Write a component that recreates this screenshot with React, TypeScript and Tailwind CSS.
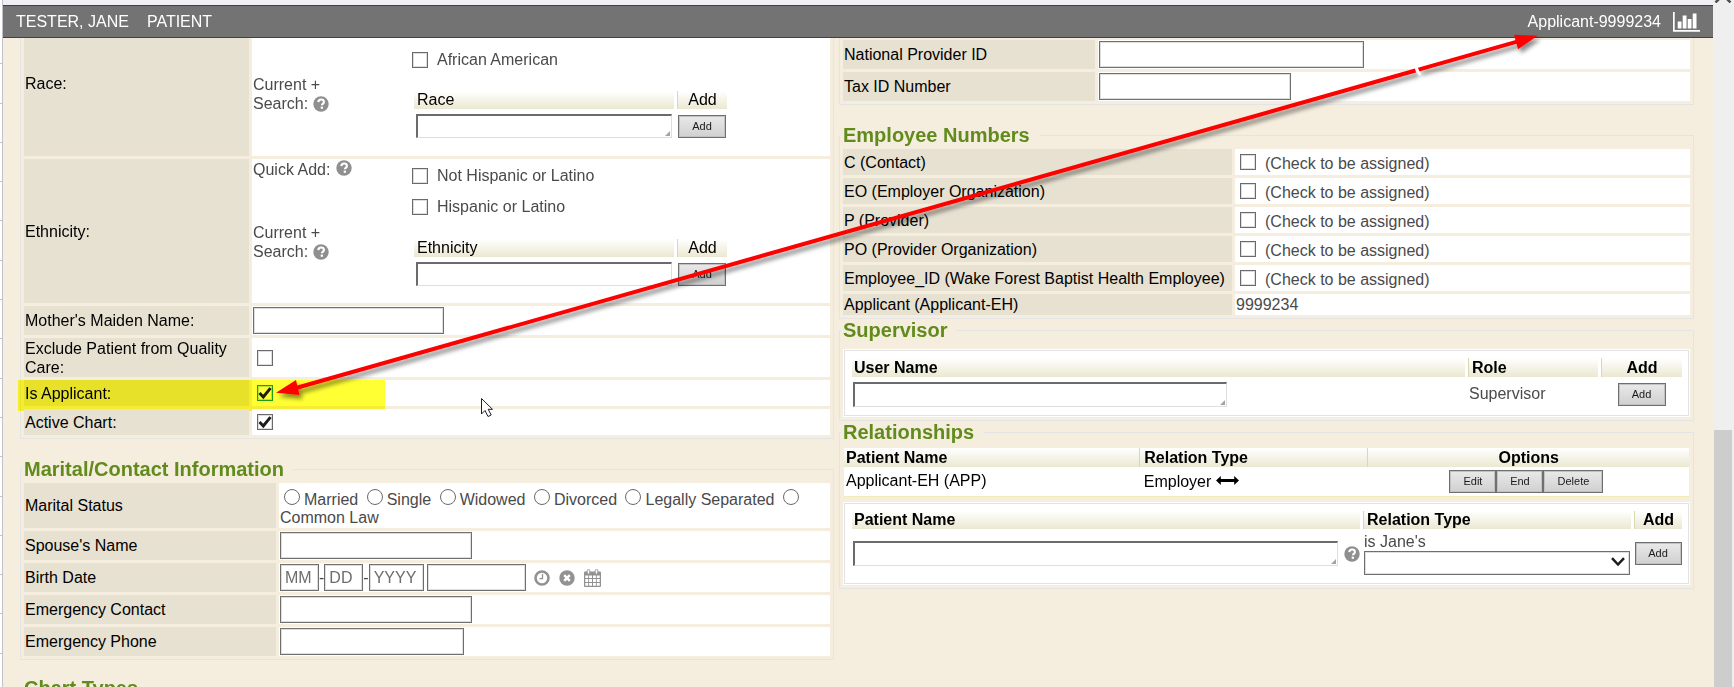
import type { ReactNode } from "react";

/* ---------- icons ---------- */

function HelpIcon() {
  return (
    <svg className="h-4 w-4 shrink-0" viewBox="0 0 16 16" role="img" aria-label="Help">
      <circle cx="8" cy="8" r="7.7" fill="#8f8f8f" />
      <path d="M5.3 6.1C5.4 4.4 6.5 3.5 8.1 3.5c1.6 0 2.8.9 2.8 2.4 0 1.9-2 1.9-2 3.3" fill="none" stroke="#fff" strokeWidth="2.1" />
      <rect x="7.7" y="10.6" width="2.3" height="2.2" fill="#fff" />
    </svg>
  );
}

function ChartIcon() {
  return (
    <svg className="h-5 w-[27px]" viewBox="0 0 27 20" fill="#fff" aria-hidden="true">
      <path d="M0 0h1.7v18H27v1.7H0z" />
      <path d="M4.700 9.500h3.800v7H4.700zM9.700 3.500h3.800v13H9.700zM14.700 7h3.800v9.500h-3.800zM19.700 1.500h3.800v15h-3.800z" />
    </svg>
  );
}

function ClockIcon() {
  return (
    <svg className="h-4 w-4" viewBox="0 0 16 16" fill="none" stroke="#929292" aria-hidden="true">
      <circle cx="8" cy="8" r="6.5" strokeWidth="2.6" />
      <path d="M8.500 4v4.700H5.400" strokeWidth="1.300" />
    </svg>
  );
}

function ClearIcon() {
  return (
    <svg className="h-4 w-4" viewBox="0 0 16 16" aria-hidden="true">
      <circle cx="8" cy="8" r="7.700" fill="#929292" />
      <path d="M5.200 5.200l5.600 5.600M10.800 5.200l-5.600 5.600" stroke="#fff" strokeWidth="2.500" />
    </svg>
  );
}

function CalendarIcon() {
  return (
    <svg className="h-[18px] w-[17px]" viewBox="0 0 17 18" aria-hidden="true">
      <rect x="0" y="2.500" width="17" height="15.500" rx="1" fill="#929292" />
      <path
        fill="#fff"
        d="M1.300 6.500h2.900v2.600H1.300zM5.100 6.500h2.900v2.600H5.100zM9 6.500h2.900v2.600H9zM12.800 6.500h2.900v2.600h-2.900zM1.300 10.100h2.900v3H1.300zM5.100 10.100h2.900v3H5.100zM9 10.100h2.900v3H9zM12.800 10.100h2.900v3h-2.900zM1.300 14.100h2.900v2.700H1.300zM5.100 14.100h2.900v2.700H5.100zM9 14.100h2.900v2.700H9zM12.800 14.100h2.900v2.700h-2.900z"
      />
      <rect x="3.200" y="0.500" width="2.600" height="4.500" rx="1.200" fill="#fff" stroke="#929292" />
      <rect x="11.200" y="0.500" width="2.600" height="4.500" rx="1.200" fill="#fff" stroke="#929292" />
    </svg>
  );
}

function BothWaysIcon() {
  return (
    <svg className="mb-1 h-[9px] w-[23px]" viewBox="0 0 23 9" aria-hidden="true">
      <path d="M0 4.500L4.800 0v3h13.400V0L23 4.500 18.200 9V6H4.800v3z" fill="#000" />
    </svg>
  );
}

/* ---------- form controls ---------- */

function Check({ id, checked = false, active = false }: { id: string; checked?: boolean; active?: boolean }) {
  return (
    <span className="relative inline-flex h-4 w-4 shrink-0">
      <input
        id={id}
        type="checkbox"
        defaultChecked={checked}
        className={`peer h-4 w-4 appearance-none border bg-white ${
          active ? "border-[#1a9e58] shadow-[inset_0_0_0_1px_#b8e8d0]" : "border-[#6a6a6a] shadow-[inset_0_0_0_1px_#dedede]"
        }`}
      />
      <svg className="pointer-events-none absolute inset-0 hidden h-4 w-4 peer-checked:block" viewBox="0 0 16 16" aria-hidden="true">
        <path d="M2.500 8L6.300 12 13.500 3.200" fill="none" stroke="#1c1c1c" strokeWidth="2.900" />
      </svg>
    </span>
  );
}

const BOX = "h-[27px] border border-[#6f6f6f] bg-white px-1 text-base shadow-[inset_0_0_0_1px_#dedede] placeholder:text-[#6d6d6d] outline-none";

function Box({ id, width, hint, label }: { id: string; width: string; hint?: string; label?: string }) {
  return <input id={id} type="text" placeholder={hint} aria-label={label} className={`${BOX} ${width}`} />;
}

function Area({ label, size, grip = true }: { label: string; size: string; grip?: boolean }) {
  return (
    <span className={`relative flex ${size}`}>
      <textarea
        aria-label={label}
        rows={1}
        className="h-full w-full resize-none overflow-hidden border border-t-2 border-l-2 border-t-[#6b6b6b] border-r-[#dedede] border-b-[#dedede] border-l-[#6b6b6b] bg-white outline-none"
      />
      {grip && (
        <svg className="pointer-events-none absolute right-[2px] bottom-[2px] h-[5px] w-[5px]" viewBox="0 0 5 5" aria-hidden="true">
          <path d="M5 0v5H0z" fill="#a3a3a3" />
        </svg>
      )}
    </span>
  );
}

function Button({ children, width = "w-12" }: { children: ReactNode; width?: string }) {
  return (
    <button
      type="button"
      className={`h-[23px] border border-[#6f6f6f] bg-linear-to-b from-[#e9e9e9] to-[#d0d0d0] text-[11px] leading-none text-[#1a1a1a] shadow-[inset_0_0_0_1px_#c2c2c2] ${width}`}
    >
      {children}
    </button>
  );
}

/* ---------- layout pieces ---------- */

function Section({ title, className = "", children }: { title?: string; className?: string; children?: ReactNode }) {
  return (
    <fieldset className={`min-w-0 border border-[#e4e4e4] px-[3px] pb-[3px] ${title ? "" : "border-t-0"} ${className}`}>
      {title && <legend className="-ml-[2px] pr-[9px] pl-[2px] text-xl leading-[22px] font-bold text-[#618b1c]">{title}</legend>}
      {children}
    </fieldset>
  );
}

function Row({
  label,
  htmlFor,
  labelWidth,
  height,
  highlighted = false,
  children,
}: {
  label: string;
  htmlFor?: string;
  labelWidth: string;
  height: string;
  highlighted?: boolean;
  children: ReactNode;
}) {
  return (
    <div className={`relative flex gap-[3px] ${height}`}>
      <div className={`flex shrink-0 items-center bg-[#e7e1d1] pl-px leading-[19px] text-black ${labelWidth}`}>
        {htmlFor ? <label htmlFor={htmlFor}>{label}</label> : <span>{label}</span>}
      </div>
      <div className="flex min-w-0 flex-1 items-center bg-white pl-px">{children}</div>
      {highlighted && <div className="pointer-events-none absolute top-0 -left-[6px] h-[31px] w-[367px] bg-[#ffff33] mix-blend-multiply" />}
    </div>
  );
}

const TH = "bg-linear-to-b from-white to-[#ebe8d1] p-0 text-left text-black";
const TH_SEP = "border-l border-[#dad8b0]";

function PickTable({ name, grip }: { name: string; grip?: boolean }) {
  return (
    <table className="mt-[13px] border-separate border-spacing-[3px] self-start justify-self-start">
      <thead>
        <tr className="h-[18px] leading-[18px]">
          <th className={`w-[260px] font-normal ${TH}`}><span className="pl-[3px]">{name}</span></th>
          <th className={`w-[50px] font-normal ${TH} ${TH_SEP}`}><span className="block text-center">Add</span></th>
        </tr>
      </thead>
      <tbody>
        <tr className="h-7">
          <td className="p-0 pl-[2px]"><Area label={name} size="h-6 w-64" grip={grip} /></td>
          <td className="p-0 pl-px"><Button>Add</Button></td>
        </tr>
      </tbody>
    </table>
  );
}

function CurrentSearch() {
  return (
    <div>
      Current +
      <div className="flex items-center gap-[5px]">Search: <HelpIcon /></div>
    </div>
  );
}

function Option({ id, children }: { id: string; children: ReactNode }) {
  return (
    <label htmlFor={id} className="ml-px flex items-center gap-[9px]">
      <Check id={id} />
      {children}
    </label>
  );
}

function WhiteBox({ children, className = "" }: { children: ReactNode; className?: string }) {
  return (
    <div className={`bg-white p-px ${className}`}>
      <div className="border border-[#e2e3e6] py-1 pr-[3px] pl-1">{children}</div>
    </div>
  );
}

const STATUSES = ["Married", "Single", "Widowed", "Divorced", "Legally Separated", "Common Law"];

const NUMBERS = [
  "C (Contact)",
  "EO (Employer Organization)",
  "P (Provider)",
  "PO (Provider Organization)",
  "Employee_ID (Wake Forest Baptist Health Employee)",
];

function LeftColumn() {
  const a = "w-[225px]";
  const b = "w-[252px]";
  return (
    <div className="min-w-0">
      {/* the first row is scrolled partly under the header */}
      <Section className="-mt-7">
        <div className="flex flex-col gap-[3px]">
          <Row label="Race:" labelWidth={a} height="h-[146px]">
            <div className="grid h-full grid-cols-[158px_1fr] grid-rows-[65px_1fr] leading-[19px]">
              <div />
              <div className="pt-10"><Option id="african">African American</Option></div>
              <CurrentSearch />
              <PickTable name="Race" />
            </div>
          </Row>
          <Row label="Ethnicity:" labelWidth={a} height="h-[144px]">
            <div className="grid h-full grid-cols-[158px_1fr] grid-rows-[64px_1fr] leading-[19px]">
              <div className="flex items-start gap-[6px] pt-px">Quick Add: <HelpIcon /></div>
              <div className="flex flex-col gap-3 pt-[7px]">
                <Option id="not-hispanic">Not Hispanic or Latino</Option>
                <Option id="hispanic">Hispanic or Latino</Option>
              </div>
              <CurrentSearch />
              <PickTable name="Ethnicity" grip={false} />
            </div>
          </Row>
          <Row label="Mother's Maiden Name:" htmlFor="maiden" labelWidth={a} height="h-[29px]">
            <Box id="maiden" width="w-[191px]" />
          </Row>
          <Row label="Exclude Patient from Quality Care:" htmlFor="exclude" labelWidth={a} height="h-[39px]">
            <span className="ml-1 flex"><Check id="exclude" /></span>
          </Row>
          <Row label="Is Applicant:" htmlFor="applicant" labelWidth={a} height="h-[26px]" highlighted>
            <span className="ml-1 flex"><Check id="applicant" checked active /></span>
          </Row>
          <Row label="Active Chart:" htmlFor="active" labelWidth={a} height="h-[26px]">
            <span className="ml-1 flex"><Check id="active" checked /></span>
          </Row>
        </div>
      </Section>

      <Section title="Marital/Contact Information" className="mt-[19px]">
        <div className="flex flex-col gap-[3px] pt-[3px]">
          <Row label="Marital Status" labelWidth={b} height="h-[45px]">
            <div className="pt-1 leading-[18px]">
              {STATUSES.map((status) => (
                <span key={status}>
                  <input
                    type="radio"
                    name="marital"
                    id={`status-${status}`}
                    className="mr-1 ml-1 h-4 w-4 appearance-none rounded-full border border-[#6a6a6a] bg-white align-baseline"
                  />
                  <label htmlFor={`status-${status}`}>{status}</label>{" "}
                </span>
              ))}
            </div>
          </Row>
          <Row label="Spouse's Name" htmlFor="spouse" labelWidth={b} height="h-[29px]">
            <Box id="spouse" width="w-48" />
          </Row>
          <Row label="Birth Date" htmlFor="month" labelWidth={b} height="h-[29px]">
            <Box id="month" width="w-[39px]" hint="MM" />
            <span>-</span>
            <Box id="day" width="w-[39px]" hint="DD" label="Day" />
            <span>-</span>
            <Box id="year" width="w-[55px]" hint="YYYY" label="Year" />
            <span className="ml-[3px] flex"><Box id="time" width="w-[99px]" label="Time" /></span>
            <span className="ml-2 flex items-center gap-[9px]">
              <button type="button" aria-label="Now"><ClockIcon /></button>
              <button type="button" aria-label="Clear"><ClearIcon /></button>
              <button type="button" aria-label="Calendar"><CalendarIcon /></button>
            </span>
          </Row>
          <Row label="Emergency Contact" htmlFor="contact" labelWidth={b} height="h-[29px]">
            <Box id="contact" width="w-48" />
          </Row>
          <Row label="Emergency Phone" htmlFor="phone" labelWidth={b} height="h-[29px]">
            <Box id="phone" width="w-[184px]" />
          </Row>
        </div>
      </Section>

      <Section title="Chart Types" className="mt-[17px]" />
    </div>
  );
}

function RightColumn() {
  const c = "w-[252px]";
  const d = "w-[389px] whitespace-nowrap";
  return (
    <div className="min-w-0">
      <Section className="pt-[2px]">
        <div className="flex flex-col gap-[3px]">
          <Row label="National Provider ID" htmlFor="npi" labelWidth={c} height="h-[29px]">
            <Box id="npi" width="w-[265px]" />
          </Row>
          <Row label="Tax ID Number" htmlFor="tax" labelWidth={c} height="h-[29px]">
            <Box id="tax" width="w-48" />
          </Row>
        </div>
      </Section>

      <Section title="Employee Numbers" className="mt-[19px]">
        <div className="flex flex-col gap-[3px] pt-[3px]">
          {NUMBERS.map((name, i) => (
            <Row key={name} label={name} htmlFor={`number-${i}`} labelWidth={d} height="h-[26px]">
              <span className="ml-1 flex items-center gap-[9px]">
                <Check id={`number-${i}`} />
                <span className="pt-1">(Check to be assigned)</span>
              </span>
            </Row>
          ))}
          <Row label="Applicant (Applicant-EH)" labelWidth={d} height="h-[21px]">
            9999234
          </Row>
        </div>
      </Section>

      <Section title="Supervisor">
        <WhiteBox className="mt-2">
          <table className="w-full border-separate border-spacing-[3px]">
            <thead>
              <tr className="h-[19px] leading-[19px]">
                <th className={TH}><span className="pl-[2px]">User Name</span></th>
                <th className={`w-[130px] ${TH} ${TH_SEP}`}><span className="pl-[3px]">Role</span></th>
                <th className={`w-[81px] ${TH} ${TH_SEP}`}><span className="block text-center">Add</span></th>
              </tr>
            </thead>
            <tbody>
              <tr className="h-7">
                <td className="p-0 pl-px"><Area label="User Name" size="h-[25px] w-[374px]" /></td>
                <td className="p-0 pl-px">Supervisor</td>
                <td className="p-0 text-center"><Button>Add</Button></td>
              </tr>
            </tbody>
          </table>
        </WhiteBox>
      </Section>

      <Section title="Relationships">
        <table className="mx-px mt-[5px] w-[calc(100%-2px)] table-fixed border-collapse text-black">
          <thead>
            <tr className="h-[19px] leading-[19px]">
              <th className={`w-[35%] ${TH}`}><span className="pl-[2px]">Patient Name</span></th>
              <th className={`w-[27%] ${TH} ${TH_SEP}`}><span className="pl-1">Relation Type</span></th>
              <th className={`${TH} ${TH_SEP}`}><span className="block text-center">Options</span></th>
            </tr>
          </thead>
          <tbody>
            <tr className="h-[29px] border-b border-[#f0eeb4] bg-white">
              <td className="p-0 pl-[2px]">Applicant-EH (APP)</td>
              <td className="p-0 pl-1">
                <span className="flex items-center gap-[5px] pt-[2px]">Employer <BothWaysIcon /></span>
              </td>
              <td className="p-0">
                <span className="flex justify-center pr-1">
                  <Button width="w-[47px]">Edit</Button>
                  <Button width="w-[47px]">End</Button>
                  <Button width="w-[60px]">Delete</Button>
                </span>
              </td>
            </tr>
          </tbody>
        </table>
        <WhiteBox className="mt-[5px]">
          <table className="w-full border-separate border-spacing-[3px]">
            <thead>
              <tr className="h-[18px] leading-[18px]">
                <th className={TH}><span className="pl-[2px]">Patient Name</span></th>
                <th className={`w-[268px] ${TH} ${TH_SEP}`}><span className="pl-[3px]">Relation Type</span></th>
                <th className={`w-12 ${TH} ${TH_SEP}`}><span className="block text-center">Add</span></th>
              </tr>
            </thead>
            <tbody>
              <tr className="h-11">
                <td className="p-0 pl-px">
                  <span className="flex items-center gap-[6px]">
                    <Area label="Patient Name" size="h-[25px] flex-1" />
                    <HelpIcon />
                  </span>
                </td>
                <td className="p-0 px-px">
                  <label htmlFor="relation" className="block leading-[19px]">is Jane's</label>
                  <span className="relative flex">
                    <select id="relation" className="h-6 w-full appearance-none border border-[#6f6f6f] bg-white shadow-[inset_0_0_0_1px_#dedede]">
                      <option />
                    </select>
                    <svg className="pointer-events-none absolute top-[6px] right-[5px] h-[10px] w-[14px]" viewBox="0 0 14 10" aria-hidden="true">
                      <path d="M1 1.200L7 7.500 13 1.200" fill="none" stroke="#1c1c1c" strokeWidth="2.500" />
                    </svg>
                  </span>
                </td>
                <td className="p-0 text-center"><Button width="w-[47px]">Add</Button></td>
              </tr>
            </tbody>
          </table>
        </WhiteBox>
      </Section>
    </div>
  );
}

/* Callout arrow and mouse pointer floating above the form */
function Annotations() {
  return (
    <svg className="pointer-events-none absolute top-0 left-0 h-[687px] w-[1734px]" viewBox="0 0 1734 687" aria-hidden="true">
      <defs>
        <filter id="shade" filterUnits="userSpaceOnUse" x="0" y="0" width="1734" height="687">
          <feDropShadow dx="3" dy="4" stdDeviation="2" floodColor="#000" floodOpacity="0.45" />
        </filter>
      </defs>
      <g filter="url(#shade)" fill="#f00" stroke="none">
        <path d="M296 388L1415.500 70.500M1418.500 69.600L1518 41.300" stroke="#f00" strokeWidth="4" />
        <path d="M276 392.700L296 380 299.500 395z" />
        <path d="M1537.700 35.700L1514 34.700 1518 49.300z" />
      </g>
      <path d="M1416 67.500L1420 75" stroke="#fff" strokeWidth="2.500" />
      <path d="M481.500 398.500v15.500l3.500-3.500 3 6 3.200-1.500-3-5.700h4.300z" fill="#fff" stroke="#1b1b2b" strokeWidth="1" />
    </svg>
  );
}

export default function App() {
  return (
    <div className="relative flex h-screen overflow-hidden bg-[#f5eddd] font-['Liberation_Sans',Arial,sans-serif] text-base leading-[18px] text-[#4a4a4a]">
      <div className="-mb-[6px] flex w-[3px] shrink-0 flex-col border-r border-[#bfc3c8] bg-white pt-[25px]">
        {Array.from({ length: 17 }, (_, i) => (
          <div key={i} className="flex-1 border-b border-[#bfc3c8]" />
        ))}
      </div>

      <div className="flex min-w-0 flex-1 flex-col">
        <div className="h-[5px] shrink-0 bg-[#efeff5]" />
        <header className="flex h-[33px] shrink-0 items-center border-y border-[#414141] bg-[#737373] px-[13px] text-white">
          <span>TESTER, JANE</span>
          <span className="ml-[18px]">PATIENT</span>
          <span className="ml-auto">Applicant-9999234</span>
          <span className="ml-3"><ChartIcon /></span>
        </header>
        <main className="grid min-h-0 flex-1 grid-cols-[814fr_855fr] items-start gap-x-[5px] overflow-hidden pr-[19px] pl-[17px]">
          <LeftColumn />
          <RightColumn />
        </main>
      </div>

      <div className="flex w-[21px] shrink-0 flex-col bg-[#efefef] pr-[2px] pl-px">
        <svg className="h-[3px] w-[18px]" viewBox="0 0 18 3" aria-hidden="true">
          <path d="M1.500 2.500L5 -1M16.500 2.500L13 -1" stroke="#505050" strokeWidth="2.500" />
        </svg>
        <div className="mt-[427px] flex-1 bg-[#cdcdcd]" />
      </div>

      <Annotations />
    </div>
  );
}
